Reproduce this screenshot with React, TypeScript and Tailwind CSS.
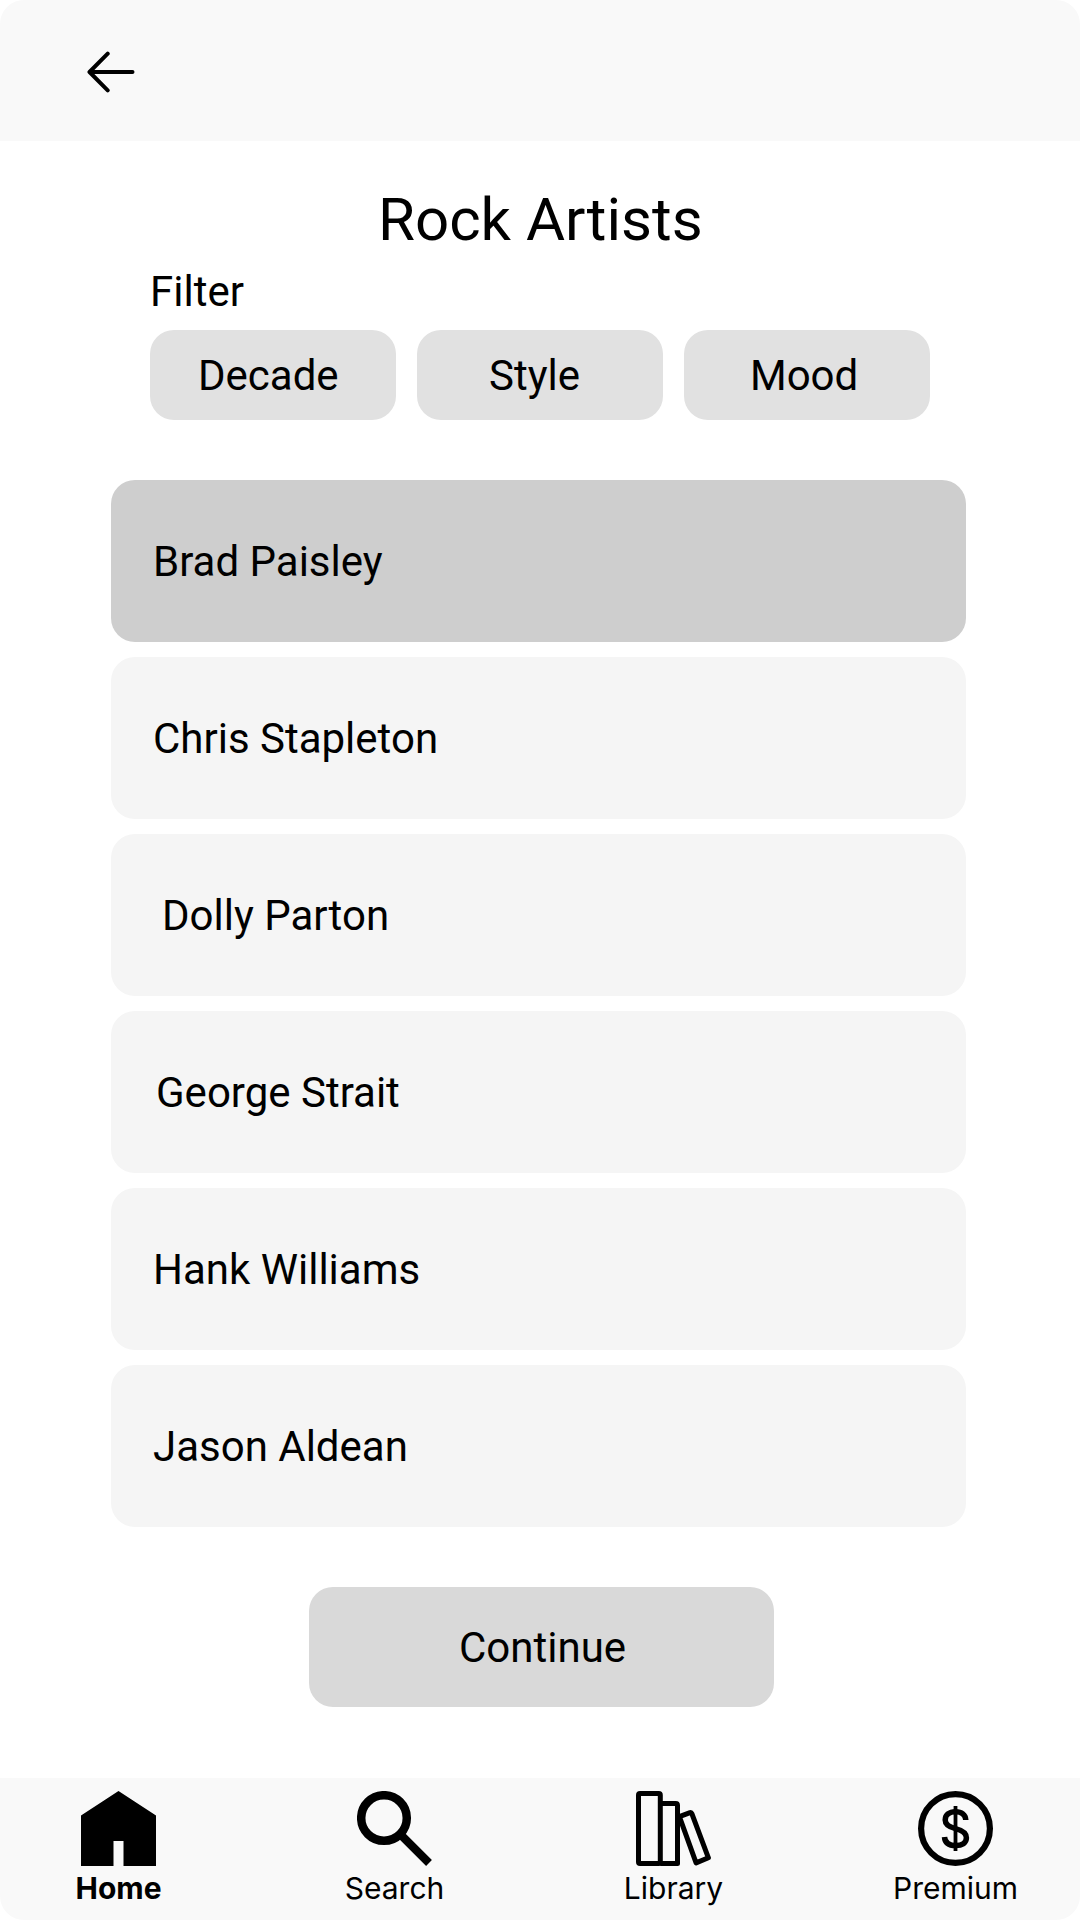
import React, { useState } from "react";
import clsx from "clsx";

const filters = [
  { label: "Decade", className: "pl-[48px]" },
  { label: "Style", className: "pl-[72px]" },
  { label: "Mood", className: "pl-[66px]" },
];

const artists = [
  { name: "Brad Paisley", className: "pl-[42px]" },
  { name: "Chris Stapleton", className: "pl-[42px]" },
  { name: "Dolly Parton", className: "pl-[51px]" },
  { name: "George Strait", className: "pl-[45px]" },
  { name: "Hank Williams", className: "pl-[42px]" },
  { name: "Jason Aldean", className: "pl-[42px]" },
];

const ArrowIcon = () => (
  <svg
    width="48"
    height="42"
    viewBox="0 0 48 42"
    fill="none"
    stroke="currentColor"
    strokeWidth="4"
    strokeLinecap="round"
    strokeLinejoin="round"
  >
    <path d="M45.5 21H3M20.7 2.7L2.5 21L20.7 39.3" />
  </svg>
);

const HomeIcon = () => (
  <svg width="75" height="75" viewBox="0 0 75 75" fill="currentColor">
    <path d="M37.5 0L75 24.5V75H42.5V50H32.5V75H0V24.5Z" />
  </svg>
);

const SearchIcon = () => (
  <svg width="75" height="75" viewBox="0 0 75 75" fill="none" stroke="currentColor">
    <circle cx="27" cy="27" r="22.8" strokeWidth="8.5" />
    <path d="M43 43L72 72" strokeWidth="8.2" />
  </svg>
);

const LibraryIcon = () => (
  <svg
    width="75"
    height="75"
    viewBox="0 0 75 75"
    fill="none"
    stroke="currentColor"
    strokeWidth="5"
    strokeLinejoin="round"
  >
    <rect x="2.5" y="2.5" width="21.8" height="70" rx="1.5" />
    <path d="M24.3 12.4H39.7Q41.5 12.4 41.5 14.2V72.5H24.3" />
    <path d="M43.4 25.6L54 21.6Q55.3 21.3 55.9 22.8L72.4 66.8L60.1 71.9Z" />
  </svg>
);

const PremiumIcon = () => (
  <svg
    width="75"
    height="75"
    viewBox="0 0 75 75"
    fill="none"
    stroke="currentColor"
  >
    <circle cx="37.5" cy="37.5" r="34.4" strokeWidth="6.2" />
    <path d="M37.5 15V60" strokeWidth="3.8" />
    <path
      d="M47.8 29C47.6 23.6 43.6 20.7 37.5 20.7C31 20.7 27.2 24 27.2 29C27.2 34 31 36 37.5 37.6C44.6 39.4 48.4 41.8 48.4 46.8C48.4 52 44 54.6 37.8 54.6C31 54.6 26.9 51.8 26.5 46"
      strokeWidth="5.5"
    />
  </svg>
);

const tabs = [
  { label: "Home", icon: HomeIcon, className: "font-bold" },
  { label: "Search", icon: SearchIcon, className: "ml-[150px]" },
  { label: "Library", icon: LibraryIcon, className: "ml-[153px]" },
  { label: "Premium", icon: PremiumIcon, className: "ml-[156px]" },
];

const App = () => {
  const [selected, setSelected] = useState("Brad Paisley");

  return (
    <div className="flex h-[1920px] w-[1080px] flex-col overflow-hidden rounded-3xl bg-white font-['Roboto',sans-serif] text-[42px] leading-[50px] text-black">
      <header className="flex h-[141px] shrink-0 items-center bg-[#f9f9f9] pt-[3px] pl-[87px]">
        <button aria-label="Back">
          <ArrowIcon />
        </button>
      </header>

      <main className="flex flex-1 flex-col pt-[44px]">
        <h1 className="pl-[378px] text-[60px] leading-[70px]">Rock Artists</h1>

        <section className="mt-[12px] pl-[150px]">
          <h2>Filter</h2>
          <div className="mt-[13px] flex gap-[21px]">
            {filters.map((filter) => (
              <button
                key={filter.label}
                className={clsx(
                  "h-[90px] w-[246px] rounded-3xl bg-[#e1e1e1] pt-[2px] text-left",
                  filter.className
                )}
              >
                {filter.label}
              </button>
            ))}
          </div>
        </section>

        <ul className="mt-[60px] ml-[111px] flex w-[855px] flex-col gap-[15px]">
          {artists.map((artist) => (
            <li key={artist.name} className="flex">
              <button
                onClick={() => setSelected(artist.name)}
                className={clsx(
                  "h-[162px] w-full rounded-3xl pt-[2px] text-left",
                  artist.className,
                  selected === artist.name ? "bg-[#cecece]" : "bg-[#f5f5f5]"
                )}
              >
                {artist.name}
              </button>
            </li>
          ))}
        </ul>

        <button className="mt-[60px] ml-[309px] h-[120px] w-[465px] rounded-3xl bg-[#d9d9d9] pt-[2px] pl-[150px] text-left">
          Continue
        </button>
      </main>

      <nav className="flex h-[142px] shrink-0 bg-[#f9f9f9] pt-[13px] pl-[55.5px] font-['Inter',sans-serif] text-[30px] leading-[36px]">
        {tabs.map((tab) => (
          <button
            key={tab.label}
            className={clsx("flex w-[126px] flex-col items-center", tab.className)}
          >
            <tab.icon />
            <span className="mt-[4px]">{tab.label}</span>
          </button>
        ))}
      </nav>
    </div>
  );
};

export default App;
